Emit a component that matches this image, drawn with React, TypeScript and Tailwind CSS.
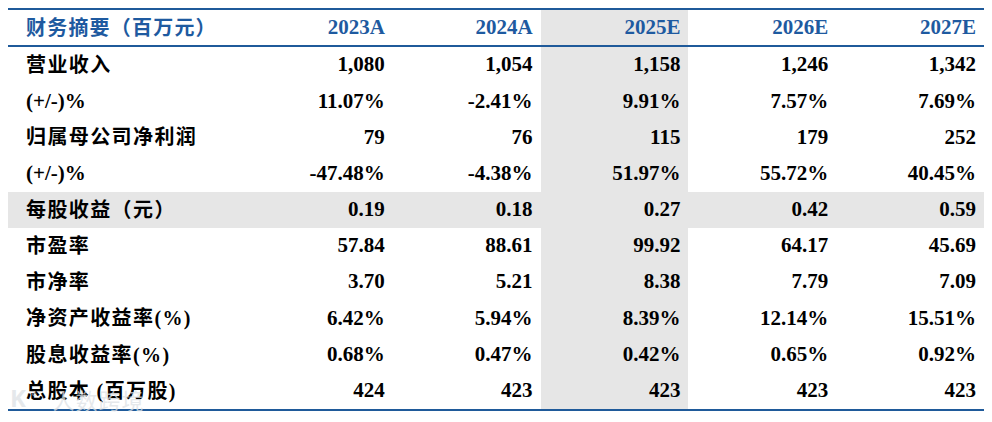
import React from "react";

const header = ["2023A", "2024A", "2025E", "2026E", "2027E"];

const rows: { label: string; values: string[]; shaded?: boolean }[] = [
  { label: "营业收入", values: ["1,080", "1,054", "1,158", "1,246", "1,342"] },
  { label: "(+/-)%", values: ["11.07%", "-2.41%", "9.91%", "7.57%", "7.69%"] },
  { label: "归属母公司净利润", values: ["79", "76", "115", "179", "252"] },
  { label: "(+/-)%", values: ["-47.48%", "-4.38%", "51.97%", "55.72%", "40.45%"] },
  { label: "每股收益（元）", values: ["0.19", "0.18", "0.27", "0.42", "0.59"], shaded: true },
  { label: "市盈率", values: ["57.84", "88.61", "99.92", "64.17", "45.69"] },
  { label: "市净率", values: ["3.70", "5.21", "8.38", "7.79", "7.09"] },
  { label: "净资产收益率(%)", values: ["6.42%", "5.94%", "8.39%", "12.14%", "15.51%"] },
  { label: "股息收益率(%)", values: ["0.68%", "0.47%", "0.42%", "0.65%", "0.92%"] },
  { label: "总股本 (百万股)", values: ["424", "423", "423", "423", "423"] },
];

const font = { fontFamily: '"Liberation Serif", "Noto Sans CJK SC", serif' };

export default function App() {
  return (
    <div className="relative h-[422px] w-[992px] overflow-hidden bg-white pt-[8px] pl-[8px]" style={font}>
      <div className="w-[976px] border-y-2 border-[#1f5a9a]">
        {/* header */}
        <div className="flex h-[37px] border-b-2 border-[#1f5a9a] text-[21px] font-bold text-[#1e5aa0]">
          <div className="flex w-[237px] items-center pl-[18px] text-[20px] tracking-[1.2px]">
            财务摘要（百万元）
          </div>
          {header.map((h, i) => (
            <div
              key={h}
              className={`flex w-[147.8px] items-center justify-end pr-[8px] ${i === 2 ? "bg-[#e6e6e6]" : ""}`}
            >
              {h}
            </div>
          ))}
        </div>

        {rows.map((r, ri) => (
          <div
            key={ri}
            className={`flex h-[36.2px] text-[21px] font-bold text-black ${r.shaded ? "bg-[#e6e6e6]" : ""}`}
          >
            <div
              className={`flex w-[237px] items-center pl-[18px] ${
                r.label === "(+/-)%" ? "text-[21px]" : "text-[20px] tracking-[1.4px]"
              }`}
            >
              {r.label}
            </div>
            {r.values.map((v, i) => (
              <div
                key={i}
                className={`flex w-[147.8px] items-center justify-end pr-[8px] ${i === 2 ? "bg-[#e6e6e6]" : ""}`}
              >
                {v}
              </div>
            ))}
          </div>
        ))}
      </div>

      {/* watermark */}
      <div className="pointer-events-none absolute left-[10px] top-[386px] flex items-end gap-[6px] text-[#dde1e5]/75">
        <span className="text-[24px] font-bold leading-none" style={{ fontFamily: '"Noto Sans", sans-serif' }}>
          K
        </span>
        <span className="mb-[12px] text-[9px] leading-none">o</span>
        <span
          className="ml-[10px] text-[22px] leading-none tracking-[1px]"
          style={{ fontFamily: '"Noto Sans CJK SC", sans-serif' }}
        >
          人数跨境
        </span>
      </div>
    </div>
  );
}
